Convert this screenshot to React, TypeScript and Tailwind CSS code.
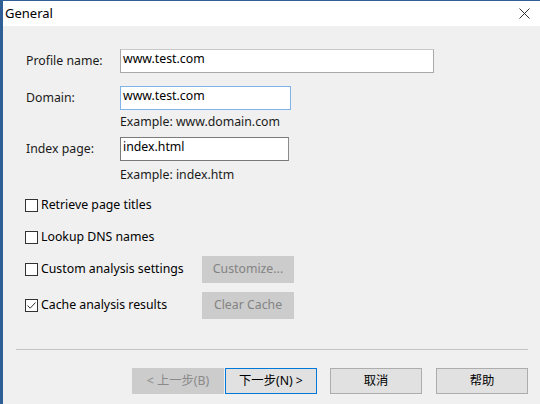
import React from "react";

const font = { fontFamily: '"Noto Sans", "Noto Sans CJK SC", sans-serif' };

function Check({ checked }: { checked?: boolean }) {
  return (
    <span className="w-[13px] h-[13px] border border-[#333333] bg-white flex items-center justify-center shrink-0">
      {checked && (
        <svg width="11" height="11" viewBox="0 0 11 11">
          <path d="M1.5 5.5 L4.2 8.2 L9.5 2.5" fill="none" stroke="#333" strokeWidth="1" />
        </svg>
      )}
    </span>
  );
}

export default function App() {
  return (
    <div
      className="w-[540px] h-[404px] bg-[#f0f0f0] border-l-[3px] border-t border-[#2f5f95] text-[12.3px] text-black overflow-hidden flex flex-col"
      style={font}
    >
      <div className="h-[25px] bg-white flex items-center justify-between pl-[2px] pr-[10px] shrink-0">
        <span className="text-[13px]">General</span>
        <svg width="11" height="11" viewBox="0 0 11 11">
          <path d="M0.5 0.5 L10.5 10.5 M10.5 0.5 L0.5 10.5" stroke="#333" strokeWidth="1" />
        </svg>
      </div>

      <div className="flex flex-col pl-[23px]">
        <div className="mt-[23px] h-[24px] flex items-center">
          <span className="w-[94px] text-[#1a1a1a]">Profile name:</span>
          <div className="w-[314px] h-[24px] bg-white border border-[#a9a9a9] border-t-[#c9c9c9] pl-[2px] leading-[18px]">www.test.com</div>
        </div>
        <div className="mt-[13px] h-[24px] flex items-center">
          <span className="w-[94px] text-[#1a1a1a]">Domain:</span>
          <div className="w-[171px] h-[24px] bg-white border border-[#7eb4ea] pl-[2px] leading-[18px]">www.test.com</div>
        </div>
        <div className="h-[24px] flex items-center pl-[94px] text-[#1a1a1a]">Example: www.domain.com</div>
        <div className="mt-[3px] h-[24px] flex items-center">
          <span className="w-[94px] text-[#1a1a1a]">Index page:</span>
          <div className="w-[169px] h-[24px] bg-white border border-[#7a7a7a] border-r-[#8a8a8a] pl-[2px] leading-[18px]">index.html</div>
        </div>
        <div className="h-[28px] flex items-center pl-[94px] text-[#1a1a1a]">Example: index.htm</div>

        <div className="h-[32px] flex items-center gap-[3px] -ml-[1px]">
          <Check />
          <span>Retrieve page titles</span>
        </div>
        <div className="h-[32px] flex items-center gap-[3px] -ml-[1px]">
          <Check />
          <span>Lookup DNS names</span>
        </div>
        <div className="h-[32px] flex items-center -ml-[1px]">
          <div className="w-[177px] flex items-center gap-[3px]">
            <Check />
            <span>Custom analysis settings</span>
          </div>
          <div className="w-[92px] h-[27px] bg-[#cccccc] text-[#838383] flex items-center justify-center">Customize...</div>
        </div>
        <div className="mt-[4px] h-[32px] flex items-center -ml-[1px]">
          <div className="w-[177px] flex items-center gap-[3px]">
            <Check checked />
            <span>Cache analysis results</span>
          </div>
          <div className="w-[92px] h-[27px] bg-[#cccccc] text-[#838383] flex items-center justify-center">Clear Cache</div>
        </div>
      </div>

      <div className="mt-[28px] ml-[13px] mr-[12px] h-px bg-[#c4c4c4] shrink-0" />

      <div className="mt-[18px] flex items-center justify-end pr-[12px] shrink-0">
        <div className="w-[92px] h-[26px] bg-[#cccccc] text-[#8a8a8a] flex items-center justify-center">&lt; 上一步(B)</div>
        <div className="ml-px w-[92px] h-[26px] bg-[#e1e1e1] border border-[#0078d7] flex items-center justify-center">下一步(N) &gt;</div>
        <div className="ml-[13px] w-[92px] h-[26px] bg-[#e1e1e1] border border-[#adadad] flex items-center justify-center">取消</div>
        <div className="ml-[14px] w-[92px] h-[26px] bg-[#e1e1e1] border border-[#adadad] flex items-center justify-center">帮助</div>
      </div>
    </div>
  );
}
